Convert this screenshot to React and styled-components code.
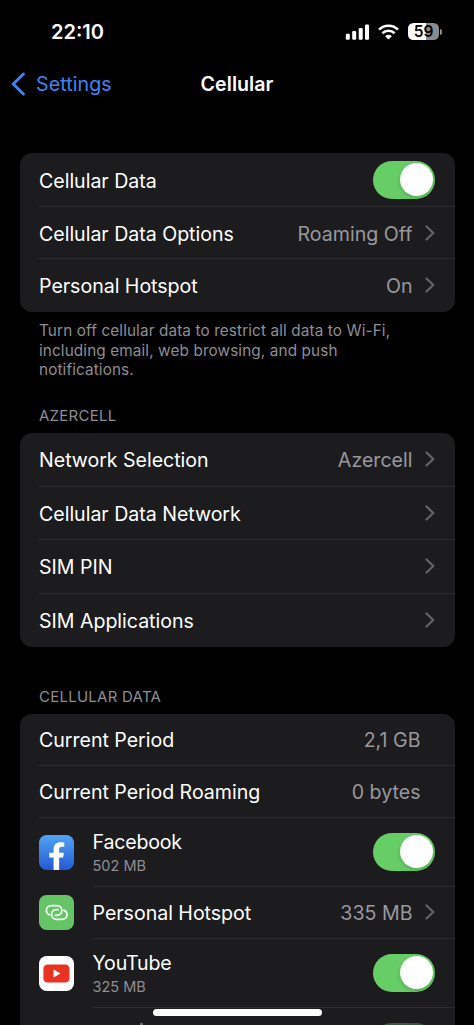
import React from 'react'
import styled, { createGlobalStyle } from 'styled-components';

const simRows = [
    { label: 'Network Selection', value: 'Azercell', height: 54 },
    { label: 'Cellular Data Network', height: 53 },
    { label: 'SIM PIN', height: 54 },
    { label: 'SIM Applications', height: 53 },
];

const Chevron = () => (
    <ChevronIcon viewBox="0 0 10 16">
        <path d="M1.5 1.5 L8.3 8 L1.5 14.5" />
    </ChevronIcon>
)

const Switch = ({ dim }) => (
    <Toggle $dim={dim}>
        <Knob />
    </Toggle>
)

const SignalIcon = () => (
    <svg width="24" height="16" viewBox="0 0 24 16" fill="#fff">
        <rect x="0.8" y="9.8" width="4" height="5.9" rx="1.2" />
        <rect x="7.2" y="7" width="4" height="8.7" rx="1.2" />
        <rect x="13.7" y="3.9" width="4" height="11.8" rx="1.2" />
        <rect x="20" y="0.5" width="4" height="15.2" rx="1.2" />
    </svg>
)

const WifiIcon = () => (
    <svg width="21" height="16" viewBox="0 0 21 16" fill="none" stroke="#fff" strokeWidth="2.6">
        <path d="M1 5.6 A13.6 13.6 0 0 1 20 5.6" />
        <path d="M4.4 9.2 A8.8 8.8 0 0 1 16.6 9.2" />
        <path d="M10.5 15.6 L7.1 12.2 A4.8 4.8 0 0 1 13.9 12.2 Z" fill="#fff" stroke="none" />
    </svg>
)

const FacebookIcon = () => (
    <svg width="35" height="35" viewBox="0 0 36 36">
        <defs>
            <linearGradient id="fb" x1="0" y1="0" x2="0" y2="1">
                <stop offset="0" stopColor="#51a5f3" />
                <stop offset="1" stopColor="#2558d4" />
            </linearGradient>
        </defs>
        <rect width="36" height="36" rx="8" fill="url(#fb)" />
        <path fill="#fff" d="M15 36 V23.2 H10.6 V18.2 H15 V14.8 C15 10 17.8 7.4 22.2 7.4 C23.8 7.4 26 7.7 26 7.7 V12.2 H23.6 C21.3 12.2 20.7 13.5 20.7 15 V18.2 H25.6 L24.8 23.2 H20.7 V36 Z" />
    </svg>
)

const HotspotIcon = () => (
    <svg width="35" height="35" viewBox="0 0 36 36">
        <rect width="36" height="36" rx="8" fill="#65c466" />
        <g fill="none" stroke="#f4fff4" strokeWidth="1.8" strokeLinecap="round">
            <path d="M10.8 20.4 C8.9 19.6 7.6 18 7.6 15.9 C7.6 13 9.9 10.9 12.8 10.9 H18.2 C21.3 10.9 23.5 13 23.5 15.9 C23.5 18.8 21.3 20.9 18.4 20.9 H16.8" />
            <path d="M25.6 15.5 C27.5 16.3 28.8 17.9 28.8 20 C28.8 22.9 26.5 25 23.6 25 H18.2 C15.1 25 12.9 22.9 12.9 20 C12.9 17.1 15.1 15 18 15 H19.6" />
        </g>
    </svg>
)

const YoutubeIcon = () => (
    <svg width="35" height="35" viewBox="0 0 36 36">
        <rect width="36" height="36" rx="8" fill="#fff" />
        <rect x="4.5" y="8.7" width="26.9" height="18.6" rx="4.4" fill="#ea3223" />
        <path d="M15 14 L22.2 18 L15 22 Z" fill="#fff" />
    </svg>
)

const App = () => {
    return (
        <Screen>
            <GlobalStyle />
            <StatusBar>
                <Time>22:10</Time>
                <StatusIcons>
                    <SignalIcon />
                    <WifiIcon />
                    <BatteryWrap>
                        <Battery>59</Battery>
                        <BatteryTip />
                    </BatteryWrap>
                </StatusIcons>
            </StatusBar>

            <NavBar>
                <Back>
                    <svg width="14" height="24" viewBox="0 0 14 24">
                        <path d="M12.4 2 L2.2 12 L12.4 22" fill="none" stroke="#3f85f2" strokeWidth="2.9" strokeLinecap="round" strokeLinejoin="round" />
                    </svg>
                    Settings
                </Back>
                <Title>Cellular</Title>
            </NavBar>

            <Card>
                <Row $height={54}>
                    <Label>Cellular Data</Label>
                    <Switch />
                </Row>
                <Row $height={52}>
                    <Label>Cellular Data Options</Label>
                    <Value>Roaming Off</Value>
                    <Chevron />
                </Row>
                <Row $height={53} $last>
                    <Label>Personal Hotspot</Label>
                    <Value>On</Value>
                    <Chevron />
                </Row>
            </Card>
            <Note>
                Turn off cellular data to restrict all data to Wi-Fi,<br />
                including email, web browsing, and push<br />
                notifications.
            </Note>

            <SectionTitle $top={26}>AZERCELL</SectionTitle>
            <Card>
                {simRows.map((row, i) => {
                    return (
                        <Row key={row.label} $height={row.height} $last={i === simRows.length - 1}>
                            <Label>{row.label}</Label>
                            {row.value && <Value>{row.value}</Value>}
                            <Chevron />
                        </Row>
                    )
                })}
            </Card>

            <SectionTitle $top={40}>CELLULAR DATA</SectionTitle>
            <Card>
                <Row $height={52}>
                    <Label>Current Period</Label>
                    <Value $end>2,1 GB</Value>
                </Row>
                <Row $height={52}>
                    <Label>Current Period Roaming</Label>
                    <Value $end>0 bytes</Value>
                </Row>
                <AppRow>
                    <FacebookIcon />
                    <Row $height={69}>
                        <AppName>
                            <Label $tight>Facebook</Label>
                            <Usage>502 MB</Usage>
                        </AppName>
                        <Switch />
                    </Row>
                </AppRow>
                <AppRow>
                    <HotspotIcon />
                    <Row $height={52}>
                        <Label>Personal Hotspot</Label>
                        <Value>335 MB</Value>
                        <Chevron />
                    </Row>
                </AppRow>
                <AppRow>
                    <YoutubeIcon />
                    <Row $height={69}>
                        <AppName>
                            <Label $tight>YouTube</Label>
                            <Usage>325 MB</Usage>
                        </AppName>
                        <Switch />
                    </Row>
                </AppRow>
                <NextRow>
                    <Sliver />
                    <Switch dim />
                </NextRow>
            </Card>
            <HomeIndicator />
        </Screen>
    )
}

const GlobalStyle = createGlobalStyle`
    body {
        margin: 0;
        background: #000;
    }
    * {
        box-sizing: border-box;
    }
`

const Screen = styled.div`
    position: relative;
    width: 474px;
    height: 1025px;
    overflow: hidden;
    background: #000;
    color: #fff;
    font-family: Inter, "Liberation Sans", sans-serif;
    font-size: 19.6px;
    svg {
        display: block;
        flex-shrink: 0;
    }
`

const StatusBar = styled.div`
    display: flex;
    justify-content: space-between;
    align-items: center;
    height: 63px;
    padding: 0 32px 0 51px;
`

const Time = styled.div`
    font-size: 20px;
    font-weight: 600;
`

const StatusIcons = styled.div`
    display: flex;
    align-items: center;
    gap: 9px;
`

const BatteryWrap = styled.div`
    display: flex;
    align-items: center;
    gap: 1px;
`

const Battery = styled.div`
    width: 31px;
    height: 17px;
    border-radius: 5.5px;
    background: linear-gradient(90deg, #fff 59%, #8b8b8b 59%);
    color: #000;
    font-size: 15.5px;
    font-weight: 600;
    line-height: 17px;
    text-align: center;
    letter-spacing: -0.2px;
`

const BatteryTip = styled.div`
    width: 2px;
    height: 6px;
    border-radius: 0 2px 2px 0;
    background: #8b8b8b;
`

const NavBar = styled.div`
    display: grid;
    grid-template-columns: 1fr auto 1fr;
    align-items: center;
    height: 42px;
    margin-bottom: 48px;
    padding: 0 11px;
`

const Back = styled.div`
    display: flex;
    align-items: center;
    gap: 11px;
    color: #3f85f2;
    letter-spacing: 0.1px;
`

const Title = styled.div`
    font-weight: 600;
    letter-spacing: 0.05px;
`

const Card = styled.div`
    margin: 0 19.5px 0 20px;
    padding-left: 19px;
    border-radius: 12px;
    background: #1c1c1e;
`

const Row = styled.div`
    display: flex;
    flex: 1;
    align-items: center;
    height: ${props => props.$height}px;
    padding-right: 19.5px;
    border-bottom: 1px solid ${props => props.$last ? 'transparent' : '#2d2d2f'};
`

const AppRow = styled.div`
    display: flex;
    align-items: center;
    gap: 18.5px;
`

const Label = styled.div`
    flex: 1;
    padding-top: 2px;
    line-height: 24px;
    letter-spacing: ${props => props.$tight ? '-0.2px' : '-0.03px'};
    white-space: nowrap;
`

const Value = styled.div`
    margin-right: ${props => props.$end ? 14.5 : 12.5}px;
    padding-top: 2px;
    line-height: 24px;
    color: #98989e;
`

const AppName = styled.div`
    flex: 1;
`

const Usage = styled.div`
    margin-top: 2px;
    color: #8e8e94;
    font-size: 14.5px;
    line-height: 20px;
`

const ChevronIcon = styled.svg`
    width: 10px;
    height: 16px;
    fill: none;
    stroke: #636366;
    stroke-width: 2.3;
    stroke-linecap: round;
    stroke-linejoin: round;
`

const Toggle = styled.div`
    display: flex;
    justify-content: flex-end;
    width: 62px;
    height: 38px;
    padding: 2.5px;
    border-radius: 19px;
    background: ${props => props.$dim ? '#345c37' : '#67ce67'};
`

const Knob = styled.div`
    width: 33px;
    height: 33px;
    border-radius: 50%;
    background: #fff;
    box-shadow: 0 2px 5px rgba(0,0,0,0.18);
`

const Note = styled.div`
    margin: 9px 39px 0;
    color: #8e8e94;
    font-size: 15.3px;
    line-height: 19.5px;
    letter-spacing: 0.12px;
    white-space: nowrap;
`

const SectionTitle = styled.div`
    margin: ${props => props.$top}px 39px 7px;
    color: #8e8e94;
    font-size: 15px;
    line-height: 20px;
    letter-spacing: 0.25px;
`

const NextRow = styled.div`
    display: flex;
    justify-content: space-between;
    padding: 15px 19.5px 0 101px;
`

const Sliver = styled.div`
    width: 3px;
    height: 12px;
    background: #6c6c6e;
`

const HomeIndicator = styled.div`
    position: absolute;
    left: 152.5px;
    bottom: 9.5px;
    width: 169.5px;
    height: 6.5px;
    border-radius: 4px;
    background: #fff;
`

export default App
